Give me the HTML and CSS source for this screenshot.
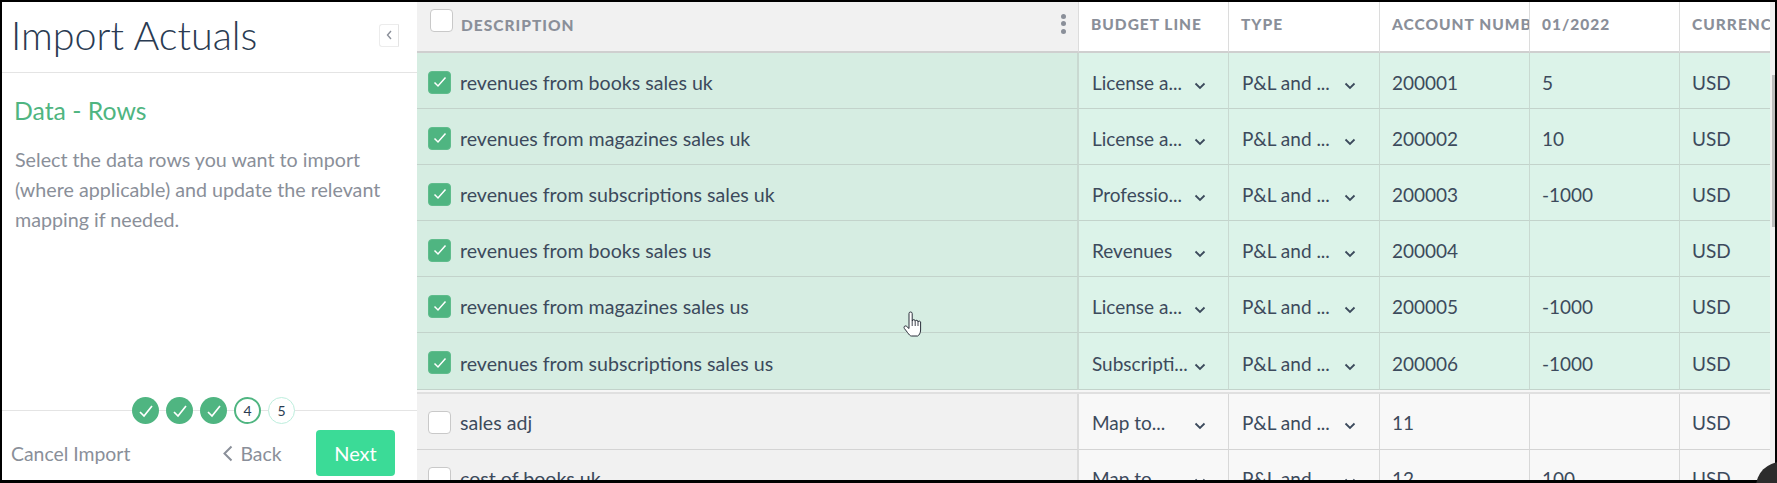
FILE: index.html
```html
<!DOCTYPE html>
<html lang="en">
<head>
<meta charset="utf-8">
<title>Import Actuals</title>
<link rel="stylesheet" href="styles.css">
</head>
<body>
<div class="frame">
  <div class="app">
    <aside class="sidebar">
      <header class="side-head">
        <h1 class="title">Import Actuals</h1>
        <button class="collapse" aria-label="Collapse"><svg width="8" height="12" viewBox="0 0 8 12"><path d="M6 2 L2.5 6 L6 10" fill="none" stroke="#8a8f99" stroke-width="1.4"/></svg></button>
      </header>
      <section class="side-body">
        <h2 class="step-title">Data - Rows</h2>
        <p class="step-desc">Select the data rows you want to import (where applicable) and update the relevant mapping if needed.</p>
      </section>
      <footer class="side-foot">
        <div class="stepper">
          <span class="dot done"><svg width="16" height="14" viewBox="0 0 16 14"><path d="M2 8 L6 12 L14 2" fill="none" stroke="#fff" stroke-width="1.7"/></svg></span>
          <span class="dot done"><svg width="16" height="14" viewBox="0 0 16 14"><path d="M2 8 L6 12 L14 2" fill="none" stroke="#fff" stroke-width="1.7"/></svg></span>
          <span class="dot done"><svg width="16" height="14" viewBox="0 0 16 14"><path d="M2 8 L6 12 L14 2" fill="none" stroke="#fff" stroke-width="1.7"/></svg></span>
          <span class="dot current">4</span>
          <span class="dot todo">5</span>
        </div>
        <div class="actions">
          <a class="cancel">Cancel Import</a>
          <a class="back"><svg width="11" height="17" viewBox="0 0 11 17"><path d="M9.5 1.5 L2.5 8.5 L9.5 15.5" fill="none" stroke="#8a8f99" stroke-width="2"/></svg>Back</a>
          <button class="next">Next</button>
        </div>
      </footer>
    </aside>

    <main class="table">
      <div class="row head">
        <div class="cell desc"><span class="box"></span><span class="head-label">DESCRIPTION</span><span class="kebab"><i></i><i></i><i></i></span></div>
        <div class="cell">BUDGET LINE</div>
        <div class="cell">TYPE</div>
        <div class="cell">ACCOUNT NUMBER</div>
        <div class="cell">01/2022</div>
        <div class="cell last">CURRENCY</div>
      </div>

      <div class="row on">
        <div class="cell desc"><span class="box checked"><svg width="14" height="12" viewBox="0 0 14 12"><path d="M1.5 6.5 L5 10 L12.5 1.5" fill="none" stroke="#fff" stroke-width="1.5"/></svg></span>revenues from books sales uk</div>
        <div class="cell"><span class="val">License a...</span><svg class="chev" width="12" height="8" viewBox="0 0 12 8"><path d="M1.5 1.5 L6 6 L10.5 1.5" fill="none" stroke="#3c4a5c" stroke-width="1.8"/></svg></div>
        <div class="cell"><span class="val">P&amp;L and ...</span><svg class="chev" width="12" height="8" viewBox="0 0 12 8"><path d="M1.5 1.5 L6 6 L10.5 1.5" fill="none" stroke="#3c4a5c" stroke-width="1.8"/></svg></div>
        <div class="cell">200001</div>
        <div class="cell">5</div>
        <div class="cell last">USD</div>
      </div>

      <div class="row on">
        <div class="cell desc"><span class="box checked"><svg width="14" height="12" viewBox="0 0 14 12"><path d="M1.5 6.5 L5 10 L12.5 1.5" fill="none" stroke="#fff" stroke-width="1.5"/></svg></span>revenues from magazines sales uk</div>
        <div class="cell"><span class="val">License a...</span><svg class="chev" width="12" height="8" viewBox="0 0 12 8"><path d="M1.5 1.5 L6 6 L10.5 1.5" fill="none" stroke="#3c4a5c" stroke-width="1.8"/></svg></div>
        <div class="cell"><span class="val">P&amp;L and ...</span><svg class="chev" width="12" height="8" viewBox="0 0 12 8"><path d="M1.5 1.5 L6 6 L10.5 1.5" fill="none" stroke="#3c4a5c" stroke-width="1.8"/></svg></div>
        <div class="cell">200002</div>
        <div class="cell">10</div>
        <div class="cell last">USD</div>
      </div>

      <div class="row on">
        <div class="cell desc"><span class="box checked"><svg width="14" height="12" viewBox="0 0 14 12"><path d="M1.5 6.5 L5 10 L12.5 1.5" fill="none" stroke="#fff" stroke-width="1.5"/></svg></span>revenues from subscriptions sales uk</div>
        <div class="cell"><span class="val">Professio...</span><svg class="chev" width="12" height="8" viewBox="0 0 12 8"><path d="M1.5 1.5 L6 6 L10.5 1.5" fill="none" stroke="#3c4a5c" stroke-width="1.8"/></svg></div>
        <div class="cell"><span class="val">P&amp;L and ...</span><svg class="chev" width="12" height="8" viewBox="0 0 12 8"><path d="M1.5 1.5 L6 6 L10.5 1.5" fill="none" stroke="#3c4a5c" stroke-width="1.8"/></svg></div>
        <div class="cell">200003</div>
        <div class="cell">-1000</div>
        <div class="cell last">USD</div>
      </div>

      <div class="row on">
        <div class="cell desc"><span class="box checked"><svg width="14" height="12" viewBox="0 0 14 12"><path d="M1.5 6.5 L5 10 L12.5 1.5" fill="none" stroke="#fff" stroke-width="1.5"/></svg></span>revenues from books sales us</div>
        <div class="cell"><span class="val">Revenues</span><svg class="chev" width="12" height="8" viewBox="0 0 12 8"><path d="M1.5 1.5 L6 6 L10.5 1.5" fill="none" stroke="#3c4a5c" stroke-width="1.8"/></svg></div>
        <div class="cell"><span class="val">P&amp;L and ...</span><svg class="chev" width="12" height="8" viewBox="0 0 12 8"><path d="M1.5 1.5 L6 6 L10.5 1.5" fill="none" stroke="#3c4a5c" stroke-width="1.8"/></svg></div>
        <div class="cell">200004</div>
        <div class="cell"></div>
        <div class="cell last">USD</div>
      </div>

      <div class="row on">
        <div class="cell desc"><span class="box checked"><svg width="14" height="12" viewBox="0 0 14 12"><path d="M1.5 6.5 L5 10 L12.5 1.5" fill="none" stroke="#fff" stroke-width="1.5"/></svg></span>revenues from magazines sales us</div>
        <div class="cell"><span class="val">License a...</span><svg class="chev" width="12" height="8" viewBox="0 0 12 8"><path d="M1.5 1.5 L6 6 L10.5 1.5" fill="none" stroke="#3c4a5c" stroke-width="1.8"/></svg></div>
        <div class="cell"><span class="val">P&amp;L and ...</span><svg class="chev" width="12" height="8" viewBox="0 0 12 8"><path d="M1.5 1.5 L6 6 L10.5 1.5" fill="none" stroke="#3c4a5c" stroke-width="1.8"/></svg></div>
        <div class="cell">200005</div>
        <div class="cell">-1000</div>
        <div class="cell last">USD</div>
      </div>

      <div class="row on">
        <div class="cell desc"><span class="box checked"><svg width="14" height="12" viewBox="0 0 14 12"><path d="M1.5 6.5 L5 10 L12.5 1.5" fill="none" stroke="#fff" stroke-width="1.5"/></svg></span>revenues from subscriptions sales us</div>
        <div class="cell"><span class="val">Subscripti...</span><svg class="chev" width="12" height="8" viewBox="0 0 12 8"><path d="M1.5 1.5 L6 6 L10.5 1.5" fill="none" stroke="#3c4a5c" stroke-width="1.8"/></svg></div>
        <div class="cell"><span class="val">P&amp;L and ...</span><svg class="chev" width="12" height="8" viewBox="0 0 12 8"><path d="M1.5 1.5 L6 6 L10.5 1.5" fill="none" stroke="#3c4a5c" stroke-width="1.8"/></svg></div>
        <div class="cell">200006</div>
        <div class="cell">-1000</div>
        <div class="cell last">USD</div>
      </div>

      <div class="divider"></div>

      <div class="row off">
        <div class="cell desc"><span class="box"></span>sales adj</div>
        <div class="cell"><span class="val">Map to...</span><svg class="chev" width="12" height="8" viewBox="0 0 12 8"><path d="M1.5 1.5 L6 6 L10.5 1.5" fill="none" stroke="#3c4a5c" stroke-width="1.8"/></svg></div>
        <div class="cell"><span class="val">P&amp;L and ...</span><svg class="chev" width="12" height="8" viewBox="0 0 12 8"><path d="M1.5 1.5 L6 6 L10.5 1.5" fill="none" stroke="#3c4a5c" stroke-width="1.8"/></svg></div>
        <div class="cell">11</div>
        <div class="cell"></div>
        <div class="cell last">USD</div>
      </div>

      <div class="row off">
        <div class="cell desc"><span class="box"></span>cost of books uk</div>
        <div class="cell"><span class="val">Map to...</span><svg class="chev" width="12" height="8" viewBox="0 0 12 8"><path d="M1.5 1.5 L6 6 L10.5 1.5" fill="none" stroke="#3c4a5c" stroke-width="1.8"/></svg></div>
        <div class="cell"><span class="val">P&amp;L and ...</span><svg class="chev" width="12" height="8" viewBox="0 0 12 8"><path d="M1.5 1.5 L6 6 L10.5 1.5" fill="none" stroke="#3c4a5c" stroke-width="1.8"/></svg></div>
        <div class="cell">12</div>
        <div class="cell">100</div>
        <div class="cell last">USD</div>
      </div>
    </main>

    <div class="scrollbar"><div class="thumb"></div></div>
  </div>

  <svg class="cursor" width="20" height="26" viewBox="0 0 20 26"><path d="M6 15 V2.6 a1.6 1.6 0 0 1 3.2 0 V10 a1.5 1.5 0 0 1 3 0.4 a1.4 1.4 0 0 1 2.8 0.6 a1.3 1.3 0 0 1 2.6 1 V19 c0 3 -1.6 5.5 -3 6 H8.5 C7 25 6 23.5 4.5 21.5 L1.4 17.5 C0.4 16 1.6 14.4 3.2 15 L6 17.5 Z" fill="#fff" stroke="#2a2f3a" stroke-width="1"/><path d="M9.2 10 V15 M12.2 10.5 V15 M15 11 V15" stroke="#2a2f3a" stroke-width="0.9" fill="none"/></svg>
  <div class="chat-bubble"></div>
</div>
</body>
</html>
```

FILE: styles.css
```css
* { box-sizing: border-box; }
html, body { margin: 0; padding: 0; }
body { font-family: "Lato", "Liberation Sans", sans-serif; color: #3c4a5c; }

.frame {
  position: relative;
  width: 1777px;
  height: 483px;
  padding: 2px 2px 3px 2px;
  background: #000;
  overflow: hidden;
}
.app {
  display: flex;
  height: 478px;
  background: #fff;
  overflow: hidden;
}

/* Sidebar */
.sidebar {
  flex: 0 0 415px;
  min-width: 0;
  display: flex;
  flex-direction: column;
  background: #fff;
}
.side-head {
  flex: 0 0 71px;
  display: flex;
  align-items: center;
  justify-content: space-between;
  padding: 0 18px 0 9px;
  border-bottom: 1px solid #e4e4e4;
}
.title {
  margin: 0;
  font-size: 39.5px;
  font-weight: 300;
  color: #2a3b52;
  line-height: 44px;
  padding-bottom: 5px;
}
.collapse {
  width: 20px;
  height: 23px;
  padding: 0;
  display: flex;
  align-items: center;
  justify-content: center;
  background: #fff;
  border: 1px solid #ececec;
  border-right: 1px solid #e4e4e4;
  border-radius: 3px 0 0 3px;
  margin-top: -4px;
}
.side-body { flex: 1; padding: 23px 13px 0 12px; }
.step-title {
  margin: 0;
  font-size: 24.8px;
  font-weight: 400;
  line-height: 30px;
  color: #4fb581;
}
.step-desc {
  margin: 19px 0 0;
  padding-left: 1px;
  font-size: 19.7px;
  line-height: 30px;
  color: #8a8f99;
  width: 386px;
}
.side-foot { flex: 0 0 70px; border-top: 1px solid #e4e4e4; }
.stepper {
  display: flex;
  gap: 7px;
  height: 27px;
  margin-top: -14px;
  padding-left: 130px;
}
.dot {
  flex: 0 0 27px;
  height: 27px;
  border-radius: 50%;
  display: flex;
  align-items: center;
  justify-content: center;
  font-size: 14px;
  color: #2a3b52;
  background: #fff;
}
.dot.done { background: #4fb581; }
.dot.current { border: 2px solid #4fb581; }
.dot.todo { border: 1px solid #bdeedd; }
.actions {
  display: flex;
  align-items: center;
  padding: 6px 22px 0 9px;
  height: 52px;
}
.cancel { font-size: 19.4px; color: #8a8f99; }
.back {
  margin-left: 92px;
  display: flex;
  align-items: center;
  gap: 7px;
  font-size: 19.4px;
  color: #8a8f99;
}
.next {
  margin-left: auto;
  width: 79px;
  height: 46px;
  padding: 0;
  background: #3bdb97;
  color: #fff;
  border: 0;
  border-radius: 4px;
  font-family: inherit;
  font-size: 20px;
}

/* Table */
.table { flex: 0 0 1353px; overflow: hidden; }
.row {
  display: grid;
  grid-template-columns: 662px 150px 151px 150px 150px 90px;
  height: 56.1px;
  font-size: 19px;
}
.cell {
  display: flex;
  align-items: center;
  padding: 4px 0 0 12px;
  white-space: nowrap;
  overflow: hidden;
  border-right: 1px solid #c9d9d1;
  border-bottom: 1px solid #c3d3cb;
}
.cell.last { border-right: 0; }
.cell.desc { padding-left: 11px; gap: 9px; font-size: 19.6px; }

.row.head {
  height: 51px;
  font-size: 15.5px;
  font-weight: 900;
  letter-spacing: 1px;
  color: #8a8f99;
}
.row.head .cell {
  padding-top: 0;
  background: #fff;
  border-right-color: #dcdcdc;
  border-bottom: 2px solid #cfcfcf;
  padding-bottom: 6px;
}
.row.head .cell.last { border-right: 0; }
.row.head .desc { background: #f1f1f1; padding-left: 13px; gap: 8px; font-size: 15.5px; }
.head-label { flex: 1; margin-top: 2px; }
.row.head .box { margin-top: -7px; }
.kebab {
  display: flex;
  flex-direction: column;
  gap: 2.5px;
  margin-right: 12px;
}
.kebab i { width: 5px; height: 5px; border-radius: 50%; background: #8a8f99; }

.row.on .cell { background: #dcf3e9; }
.row.on .desc { background: #d6ede2; border-right: 2px solid #c9d9d1; }
.row.off .cell { padding-top: 3px; background: #f8f8f8; border-right-color: #d8d8d8; border-bottom-color: #d4d4d4; }
.row.off .desc { background: #f1f1f1; border-right: 2px solid #dcdcdc; }
.divider {
  height: 4px;
  background: #f6f6f6;
  border-bottom: 2px solid #e0e0e0;
}

.box {
  flex: 0 0 23px;
  height: 23px;
  display: flex;
  align-items: center;
  justify-content: center;
  background: #fff;
  border: 1px solid #c9c9c9;
  border-radius: 4px;
  margin-top: -1px;
}
.box.checked { background: #4fb581; border-color: #5fbc8c; }
.val { flex: 0 0 100px; margin-left: 1px; overflow: hidden; }
.chev { margin: 7px 0 0 2px; }

/* Scrollbar */
.scrollbar { flex: 0 0 5px; background: #f1f1f1; padding: 73px 0 0 2px; }
.thumb { height: 152px; background: #bdbdbd; }

/* Overlays */
.cursor { position: absolute; left: 903px; top: 311px; }
.chat-bubble {
  position: absolute;
  left: 1756px;
  top: 462px;
  width: 50px;
  height: 50px;
  border-radius: 50%;
  background: #2c2c2c;
}
```
